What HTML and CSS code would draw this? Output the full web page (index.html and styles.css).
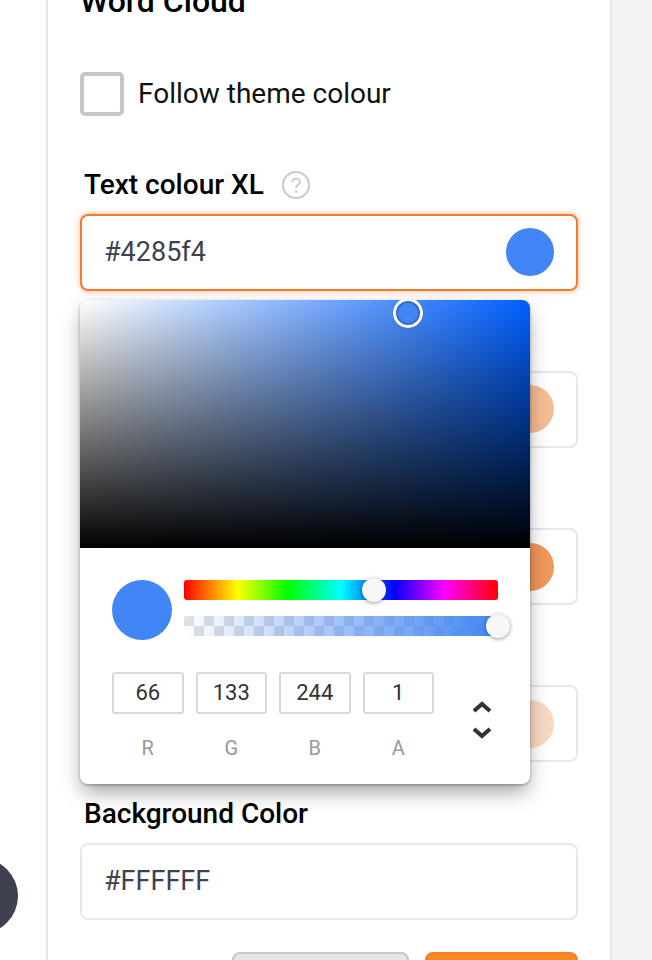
FILE: index.html
```html
<!DOCTYPE html>
<html lang="en">
<head>
    <meta charset="UTF-8">
    <meta name="viewport" content="width=device-width, initial-scale=1.0">
    <title>Word Cloud</title>
    <link rel="stylesheet" href="styles.css">
</head>
<body>

<div class="fab"></div>

<div class="panel">
    <h2 class="panel-title">Word Cloud</h2>

    <label class="check-row">
        <span class="checkbox"></span>
        <span class="check-text">Follow theme colour</span>
    </label>

    <div class="field">
        <div class="field-label">
            <span>Text colour XL</span>
            <svg class="help" width="28" height="28" viewBox="0 0 28 28" fill="none">
                <circle cx="14" cy="14" r="13" stroke="#c9cacf" stroke-width="2"/>
                <path d="M10.3 11.2c0-2.2 1.7-3.6 3.8-3.6s3.7 1.3 3.7 3.3c0 1.5-.8 2.3-2 3.1-1.1.7-1.6 1.3-1.6 2.6v.6" stroke="#c9cacf" stroke-width="1.9"/>
                <circle cx="14.2" cy="20.6" r="1.3" fill="#c9cacf"/>
            </svg>
        </div>
        <div class="color-input focused">
            <span>#4285f4</span>
            <span class="swatch swatch-blue"></span>
        </div>

        <div class="picker">
            <div class="sat-area">
                <span class="sat-handle"></span>
            </div>
            <div class="picker-body">
                <div class="picker-top">
                    <span class="picker-preview"></span>
                    <div class="sliders">
                        <div class="slider hue"><span class="thumb thumb-hue"></span></div>
                        <div class="slider alpha"><span class="thumb thumb-alpha"></span></div>
                    </div>
                </div>
                <div class="picker-inputs">
                    <div class="channel"><span class="channel-box">66</span><span class="channel-name">R</span></div>
                    <div class="channel"><span class="channel-box">133</span><span class="channel-name">G</span></div>
                    <div class="channel"><span class="channel-box">244</span><span class="channel-name">B</span></div>
                    <div class="channel"><span class="channel-box">1</span><span class="channel-name">A</span></div>
                    <svg class="mode-toggle" width="20" height="38" viewBox="0 0 20 38" fill="none">
                        <path d="M2 10l8-7 8 7M2 28l8 7 8-7" stroke="#333" stroke-width="4"/>
                    </svg>
                </div>
            </div>
        </div>
    </div>

    <div class="field">
        <div class="field-label"></div>
        <div class="color-input"><span></span><span class="swatch swatch-l"></span></div>
    </div>
    <div class="field">
        <div class="field-label"></div>
        <div class="color-input"><span></span><span class="swatch swatch-m"></span></div>
    </div>
    <div class="field">
        <div class="field-label"></div>
        <div class="color-input"><span></span><span class="swatch swatch-s"></span></div>
    </div>

    <div class="field">
        <div class="field-label"><span>Background Color</span></div>
        <div class="color-input"><span>#FFFFFF</span></div>
    </div>

    <div class="actions">
        <button class="btn btn-cancel" aria-label="Cancel"></button>
        <button class="btn btn-save" aria-label="Save"></button>
    </div>
</div>

</body>
</html>
```

FILE: styles.css
```css
html, body {
    height: 960px;
    overflow: hidden;
}
body {
    font-family: Roboto, "Liberation Sans", sans-serif;
    background: linear-gradient(to right, #fff 612px, #f3f3f3 612px);
    margin: 0;
    position: relative;
}
.panel {
    box-sizing: border-box;
    width: 566px;
    height: 1100px;
    margin: -15px 0 0 46px;
    padding: 0 32px;
    background: #fff;
    border-left: 2px solid #e8e8ea;
    border-right: 2px solid #e8e8ea;
}
.panel-title {
    margin: 0;
    font-size: 32px;
    line-height: 32px;
    font-weight: 500;
    color: #000;
}
.check-row {
    display: flex;
    align-items: center;
    gap: 14px;
    margin-top: 55px;
    font-size: 28px;
    color: #111;
}
.check-text {
    margin-top: -2px;
}
.checkbox {
    box-sizing: border-box;
    width: 44px;
    height: 44px;
    border: 4px solid #c5c6cc;
    border-radius: 5px;
}
.field {
    position: relative;
    margin-bottom: 34.33px;
}
.check-row + .field {
    margin-top: 51.5px;
}
.field-label {
    display: flex;
    align-items: center;
    gap: 18px;
    height: 34px;
    padding-left: 4px;
    margin-bottom: 12px;
    font-size: 28px;
    font-weight: 500;
    color: #000;
}
.color-input {
    box-sizing: border-box;
    display: flex;
    align-items: center;
    justify-content: space-between;
    height: 77px;
    padding: 0 22px;
    border: 2px solid #e8e8ea;
    border-radius: 8px;
    background: #fff;
    font-size: 27px;
    color: #3f4150;
}
.color-input.focused {
    border-color: #f97a2a;
    box-shadow: 0 0 6px rgba(249, 122, 42, 0.55);
}
.swatch {
    width: 48px;
    height: 48px;
    border-radius: 50%;
}
.swatch-blue { background: #4285f4; }
.swatch-l { background: #f5bd94; }
.swatch-m { background: #f0975a; }
.swatch-s { background: #fad9c4; }

.picker {
    position: absolute;
    top: 132px;
    left: 0;
    width: 450px;
    height: 484px;
    background: #fff;
    border-radius: 8px;
    box-shadow: 0 10px 20px -2px rgba(0, 0, 0, 0.36), 0 1px 3px rgba(0, 0, 0, 0.3);
    z-index: 2;
}
.sat-area {
    position: relative;
    height: 248px;
    overflow: hidden;
    border-radius: 8px 8px 0 0;
    background:
        linear-gradient(to top, #000, rgba(0, 0, 0, 0)),
        linear-gradient(to right, #fff, #005fff);
}
.sat-handle {
    position: absolute;
    left: 313px;
    top: -2px;
    width: 30px;
    height: 30px;
    box-sizing: border-box;
    border: 3px solid #fff;
    border-radius: 50%;
    background: #4285f4;
    box-shadow: inset 0 0 3px rgba(0, 0, 0, 0.8), 0 0 1px rgba(0, 0, 0, 0.4);
}
.picker-body {
    padding: 32px 32px 0;
}
.picker-top {
    display: flex;
    gap: 12px;
}
.picker-preview {
    width: 60px;
    height: 60px;
    border-radius: 50%;
    background: #4285f4;
}
.sliders {
    width: 314px;
    display: flex;
    flex-direction: column;
    gap: 16px;
}
.slider {
    position: relative;
    height: 20px;
    border-radius: 3px;
}
.hue {
    background: linear-gradient(to right, #f00 0%, #ff0 17%, #0f0 33%, #0ff 50%, #00f 67%, #f0f 83%, #f00 100%);
}
.alpha {
    background:
        linear-gradient(to right, rgba(66, 133, 244, 0), #4285f4),
        repeating-conic-gradient(#fff 0 25%, #dfe0e3 0 50%) 0 0 / 20px 20px;
}
.thumb {
    position: absolute;
    top: -2px;
    width: 24px;
    height: 24px;
    border-radius: 50%;
    background: #f7f7f7;
    box-shadow: 0 1px 4px rgba(0, 0, 0, 0.4);
}
.thumb-hue { left: 178px; }
.thumb-alpha { left: 302px; }

.picker-inputs {
    position: relative;
    display: flex;
    gap: 12px;
    margin-top: 32px;
}
.channel {
    width: 71.5px;
    display: flex;
    flex-direction: column;
    align-items: center;
    gap: 22px;
}
.channel-box {
    box-sizing: border-box;
    width: 100%;
    height: 42px;
    line-height: 38px;
    text-align: center;
    border: 2px solid #d9d9d9;
    border-radius: 3px;
    font-size: 22px;
    color: #333;
}
.channel-name {
    font-size: 20px;
    line-height: 24px;
    color: #999;
}
.mode-toggle {
    margin: 29px 0 0 26px;
}

.actions {
    display: flex;
    justify-content: flex-end;
    gap: 16px;
    margin-top: -2px;
}
.btn {
    height: 50px;
    border-radius: 8px;
    padding: 0;
}
.btn-cancel {
    width: 177px;
    background: #e6e6e9;
    border: 2px solid #c5c6cc;
}
.btn-save {
    width: 153px;
    background: #f78a22;
    border: 2px solid #f97a2a;
}

.fab {
    position: absolute;
    left: -58px;
    top: 858px;
    width: 76px;
    height: 76px;
    border-radius: 50%;
    background: #3f4150;
    z-index: 3;
}
```
